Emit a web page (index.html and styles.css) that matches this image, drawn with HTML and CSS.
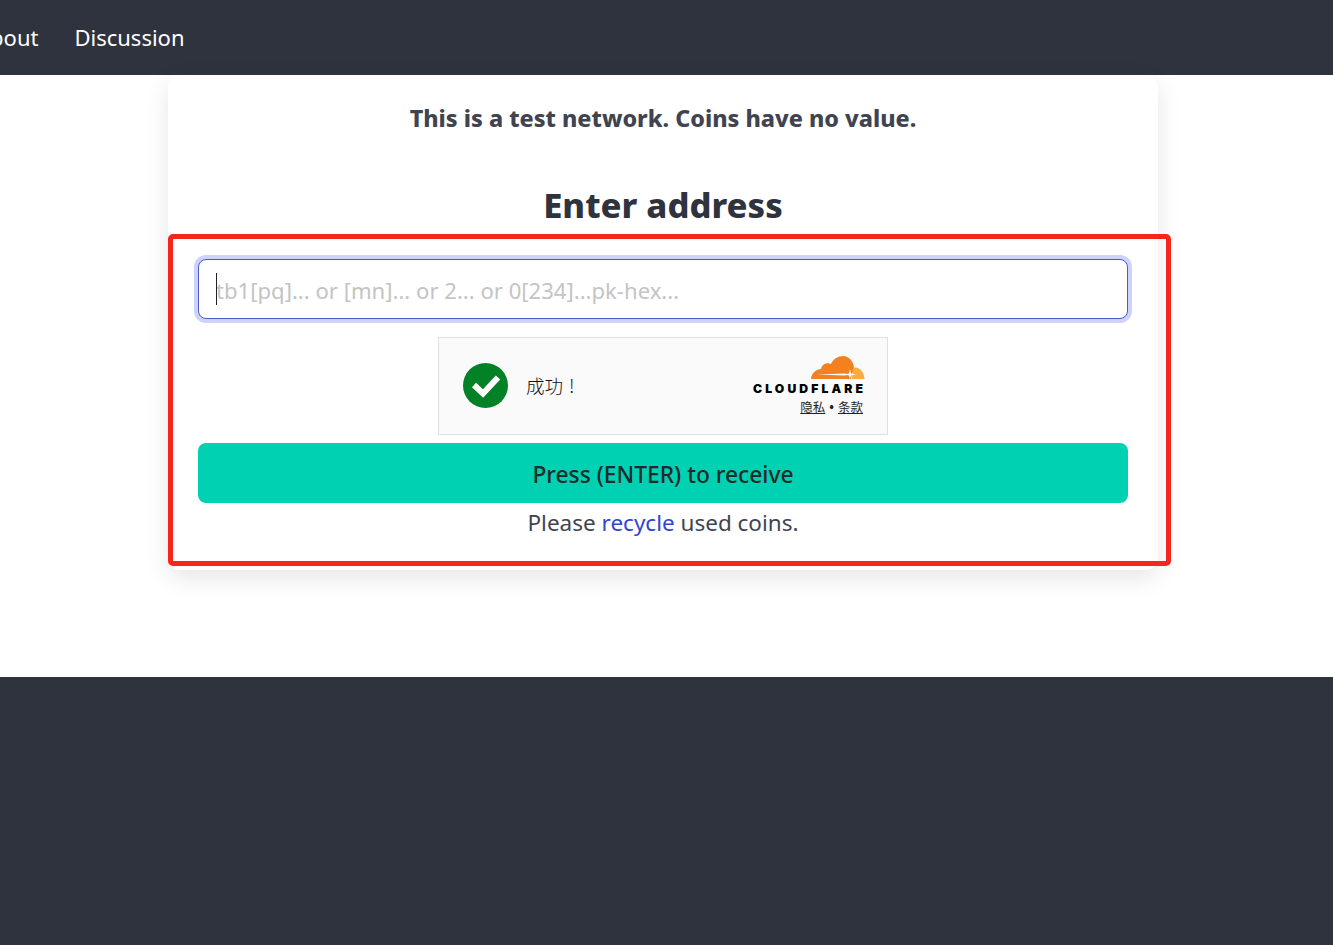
FILE: index.html
```html
<!DOCTYPE html>
<html lang="en">
<head>
  <meta charset="UTF-8" />
  <meta name="viewport" content="width=device-width, initial-scale=1.0"/>
  <title>Testnet Faucet</title>
  <link rel="stylesheet" href="styles.css">
</head>
<body>

  <nav class="navbar">
    <a href="#">About</a>
    <a href="#">Discussion</a>
  </nav>

  <section class="main">
    <div class="box">
      <p class="notice">This is a test network. Coins have no value.</p>
      <h1 class="title">Enter address</h1>
      <div class="address-wrap">
        <input class="address" type="text" placeholder="tb1[pq]... or [mn]... or 2... or 0[234]...pk-hex...">
        <span class="caret"></span>
      </div>

      <div class="captcha">
        <div class="captcha-status">
          <svg class="check" viewBox="0 0 46 46" width="46" height="46">
            <circle cx="22.5" cy="22.5" r="22.5" fill="#038127"/>
            <path d="M11 22l9 8.500 15-16" fill="none" stroke="#fff" stroke-width="6"/>
          </svg>
          <span class="captcha-text">成功<span class="bang">!</span></span>
        </div>
        <div class="captcha-brand">
          <svg class="cloud" viewBox="0 0 54 26" width="54" height="26">
            <path d="M0 24C.5 18 5 14.500 10 14 11 9 16 7 20 9 22 4 27 1 32 1c6 0 10 5 11 11l-3 12z" fill="#f48120"/>
            <path d="M41 24l1-11c6-2 11 4 11.500 11z" fill="#faad3f"/>
            <path d="M6 19.500l28-1 4 1-4 1z" fill="#fff"/>
            <path d="M39 14l1 4.500 5 1-5 1-1 3.500-1-3.500-5-1 5-1z" fill="#fff"/>
          </svg>
          <div class="wordmark">CLOUDFLARE</div>
          <div class="captcha-links"><a href="#">隐私</a><b class="dot">•</b><a href="#">条款</a></div>
        </div>
      </div>

      <button class="submit">Press (ENTER) to receive</button>
      <p class="recycle">Please <a href="#">recycle</a> used coins.</p>
    </div>
    <div class="highlight"></div>
  </section>

  <footer class="footer"></footer>

</body>
</html>
```

FILE: styles.css
```css
html, body {
  margin: 0;
  height: 100%;
}

body {
  font-family: "Noto Sans", "Open Sans", sans-serif;
  color: #3f4450;
  background-color: #2f333e;
  overflow: hidden;
}

.navbar {
  height: 73px;
  padding-bottom: 2px;
  background-color: #2f333e;
  display: flex;
  align-items: center;
  gap: 36px;
  margin-left: -24px;
  font-size: 22px;
}

.navbar a {
  color: #fff;
  text-decoration: none;
}

.main {
  position: relative;
  height: 602px;
  background: #fff;
}

.box {
  box-sizing: border-box;
  width: 990px;
  height: 495px;
  margin-left: 168px;
  padding: 29px 30px 30px;
  background: #fff;
  border-radius: 12px;
  box-shadow: 0 8px 24px rgba(10,10,10,0.1);
  display: flex;
  flex-direction: column;
  align-items: center;
}

.notice {
  margin: 0;
  font-size: 23.3px;
  line-height: 28px;
  font-weight: 800;
}

.title {
  margin: 48px 0 0;
  font-size: 34.6px;
  line-height: 50px;
  font-weight: 800;
  color: #2f333e;
}

.address-wrap {
  position: relative;
  width: 100%;
  margin-top: 29px;
}

.address {
  box-sizing: border-box;
  display: block;
  width: 100%;
  height: 60px;
  padding: 2px 17px 0;
  font-family: inherit;
  font-size: 22.1px;
  background: #fff;
  border: 1px solid #4a5ac8;
  border-radius: 8px;
  box-shadow: 0 0 0 4px #cdd3fb;
}

.address::placeholder {
  color: #c4c4c4;
}

.caret {
  position: absolute;
  left: 18px;
  top: 14px;
  width: 1px;
  height: 32px;
  background: #222;
}

.captcha {
  box-sizing: border-box;
  width: 450px;
  height: 98px;
  margin-top: 18px;
  padding: 0 24px;
  background: #fafafa;
  border: 1px solid #e0e0e0;
  display: flex;
  align-items: center;
  justify-content: space-between;
}

.captcha-status {
  display: flex;
  align-items: center;
  gap: 17px;
}

.check {
  display: block;
}

.captcha-text {
  margin-top: -3px;
  font-family: "Noto Sans CJK SC", sans-serif;
  font-size: 18.5px;
  font-weight: 300;
  color: #111;
}

.bang {
  margin-left: 6px;
}

.captcha-brand {
  display: flex;
  flex-direction: column;
  align-items: flex-end;
  margin-top: 1px;
}

.cloud {
  display: block;
  margin-right: -2px;
  margin-top: -1px;
}

.wordmark {
  font-family: "Inter", sans-serif;
  font-size: 12.2px;
  line-height: 14px;
  font-weight: 900;
  letter-spacing: 3.1px;
  margin-right: -3px;
  margin-top: 1px;
  color: #000;
}

.captcha-links {
  margin-top: 1px;
  font-family: "Noto Sans CJK SC", sans-serif;
  font-size: 12.5px;
  line-height: 20px;
  color: #232323;
}

.captcha-links a {
  color: #232323;
}

.dot {
  margin: 0 4px;
  font-family: "Noto Sans", sans-serif;
}

.submit {
  box-sizing: border-box;
  width: 100%;
  height: 60px;
  margin-top: 8px;
  padding-top: 4px;
  font-family: inherit;
  font-size: 22.8px;
  font-weight: 500;
  color: #1f2a2a;
  background: #00d1b2;
  border: none;
  border-radius: 8px;
}

.recycle {
  margin: 5px 0 0;
  font-size: 22.5px;
  line-height: 30px;
}

.recycle a {
  color: #2f46d0;
  text-decoration: none;
}

.highlight {
  position: absolute;
  left: 168px;
  top: 159px;
  width: 1003px;
  height: 332px;
  box-sizing: border-box;
  border: 5px solid #f5261b;
  border-radius: 5px;
}

.footer {
  height: 268px;
  background-color: #2f333e;
}
```
